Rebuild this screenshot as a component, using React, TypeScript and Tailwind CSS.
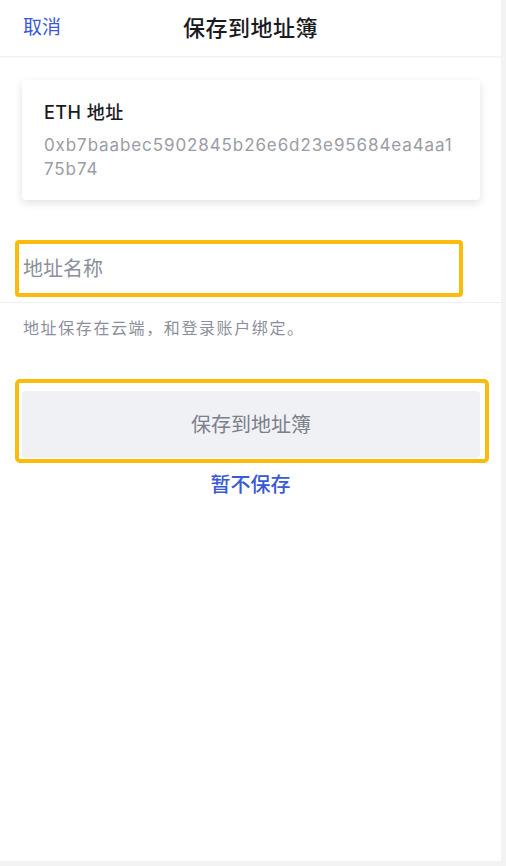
import React, { useState } from "react";

const font = { fontFamily: '"Inter", "Noto Sans CJK SC", sans-serif' };

export default function App() {
  const [name, setName] = useState("");

  return (
    <div className="w-[506px] h-[866px] bg-[#f3f3f4]" style={font}>
      <div className="w-[501px] h-[861px] bg-white flex flex-col">
        {/* Header */}
        <div className="h-[57px] grid grid-cols-[1fr_auto_1fr] items-center border-b border-[#f2f2f3] shadow-[0_1px_2px_rgba(0,0,0,0.03)]">
          <button className="justify-self-start pl-[23px] text-[19px] text-[#3a59d6]">取消</button>
          <h1 className="text-[22px] font-medium text-[#1b1b1f] tracking-[0.5px]">保存到地址簿</h1>
          <div />
        </div>

        {/* Address card */}
        <div className="mx-[22px] mt-[23px] w-[458px] rounded-[4px] bg-white shadow-[0_3px_8px_rgba(0,0,0,0.12)] px-[22px] pt-[21px] pb-[19px]">
          <div className="text-[18px] leading-[24px] font-medium text-[#1b1b1f] tracking-[0.5px]">ETH 地址</div>
          <div className="mt-[8px] text-[17px] leading-[24px] text-[#9a9ca6] break-all tracking-[0.9px]">
            0xb7baabec5902845b26e6d23e95684ea4aa175b74
          </div>
        </div>

        {/* Name input */}
        <div className="mt-[40px] border-b border-[#f0f0f2] pb-[5px]">
          <div className="ml-[15px] w-[448px] h-[57px] rounded-[4px] border-[4px] border-[#fbbb0c] flex items-center">
            <input
              value={name}
              onChange={(e) => setName(e.target.value)}
              placeholder="地址名称"
              className="w-full bg-transparent pl-[4px] text-[20px] text-[#1b1b1f] placeholder:text-[#8c8f9b] outline-none"
            />
          </div>
        </div>

        <p className="pl-[23px] pt-[14px] text-[16px] leading-[22px] text-[#8c8f9b] tracking-[1.6px]">
          地址保存在云端，和登录账户绑定。
        </p>

        {/* Save button */}
        <div className="mt-[40px] ml-[15px] w-[474px] h-[84px] rounded-[5px] border-[4px] border-[#fbbb0c] pt-[8px] pl-[3px] pr-[5px] pb-[1px]">
          <button className="w-full h-full rounded-[4px] bg-[#f0f1f5] text-[20px] text-[#7c7f89]">
            保存到地址簿
          </button>
        </div>

        <button className="mt-[8px] self-center text-[20px] leading-[28px] font-medium text-[#3a59d6]">
          暂不保存
        </button>
      </div>
    </div>
  );
}
